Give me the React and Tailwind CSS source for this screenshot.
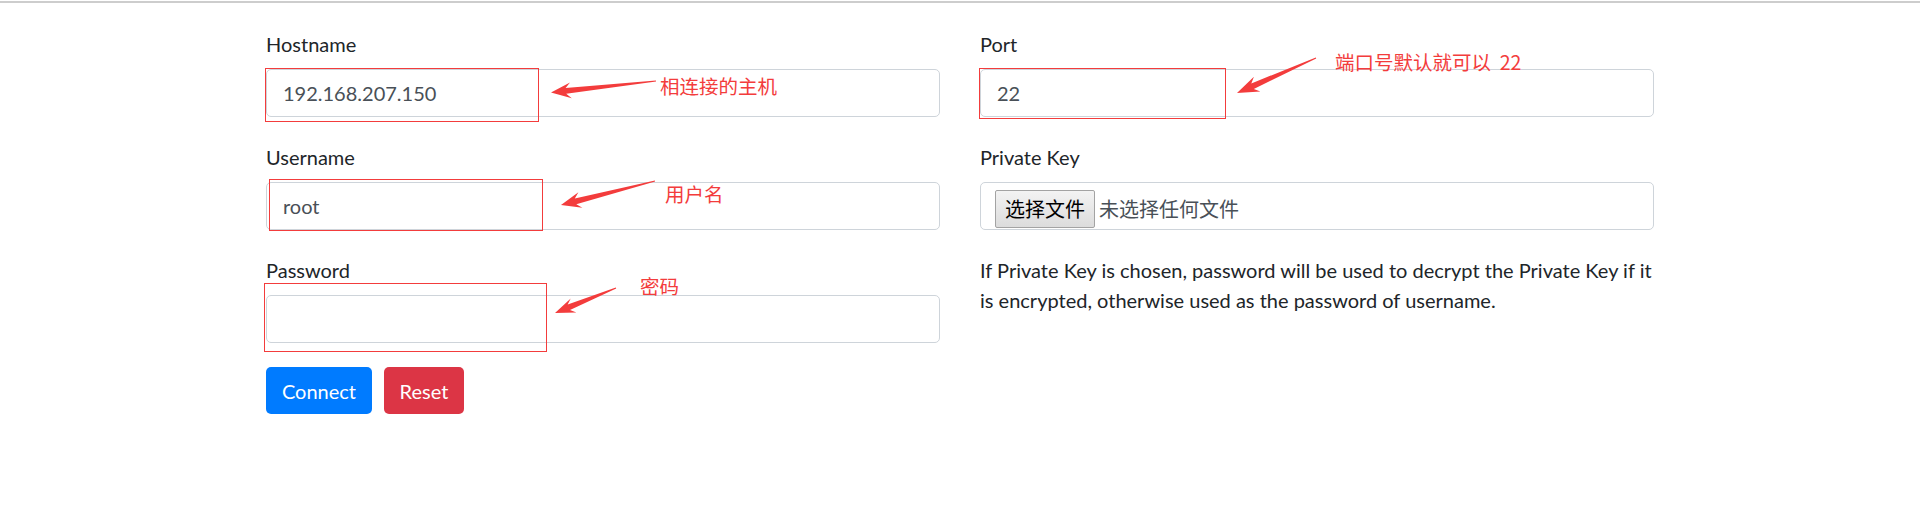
import React from "react";

const FONT = { fontFamily: "Lato, 'Noto Sans CJK SC', sans-serif" };
const CJK = { fontFamily: "'Noto Sans CJK SC', sans-serif" };

// screenshot-tool style arrow: thin tail, wide head
const Arrow = ({ tail, tip, head = 18, barb = 8, shaft = 3 }) => {
  const dx = tip[0] - tail[0];
  const dy = tip[1] - tail[1];
  const len = Math.hypot(dx, dy);
  const ux = dx / len;
  const uy = dy / len;
  const nx = -uy;
  const ny = ux;
  const bx = tip[0] - ux * head;
  const by = tip[1] - uy * head;
  const p = (x, y) => `${x.toFixed(1)},${y.toFixed(1)}`;
  const pts = [
    p(tail[0] + nx * 0.6, tail[1] + ny * 0.6),
    p(bx + ux * 3 + nx * shaft, by + uy * 3 + ny * shaft),
    p(bx - ux * 2 + nx * barb, by - uy * 2 + ny * barb),
    p(tip[0], tip[1]),
    p(bx - ux * 2 - nx * barb, by - uy * 2 - ny * barb),
    p(bx + ux * 3 - nx * shaft, by + uy * 3 - ny * shaft),
    p(tail[0] - nx * 0.6, tail[1] - ny * 0.6),
  ].join(" ");
  return <polygon points={pts} fill="#f33c3c" />;
};

const Field = ({ label, value, className = "" }) => (
  <div className={`mb-[25px] ${className}`}>
    <label className="block h-[30px] leading-[30px] text-[20px] text-[#212529] mb-[10px]">
      {label}
    </label>
    <div className="h-[48px] border border-[#ced4da] rounded-[5px] px-[16px] flex items-center text-[20px] text-[#495057]">
      {value}
    </div>
  </div>
);

const Note = ({ x, y, children }) => (
  <span
    className="absolute text-[19.5px] leading-[20px] text-[#f33c3c] whitespace-pre"
    style={{ ...CJK, left: x, top: y }}
  >
    {children}
  </span>
);

export default function App() {
  return (
    <div className="relative w-[1920px] h-[506px] bg-white overflow-hidden" style={FONT}>
      <div className="h-[3px] border-b-2 border-[#cdcdcd]" />

      <div className="w-[1388px] mx-auto pt-[26px] grid grid-cols-2 gap-x-[40px]">
        <Field label="Hostname" value="192.168.207.150" />
        <Field label="Port" value="22" />
        <Field label="Username" value="root" />

        {/* private key file input */}
        <div className="mb-[25px]">
          <label className="block h-[30px] leading-[30px] text-[20px] text-[#212529] mb-[10px]">
            Private Key
          </label>
          <div className="h-[48px] border border-[#ced4da] rounded-[5px] pl-[14px] pt-[7px] overflow-hidden flex items-start">
            <div
              className="w-[100px] h-[38px] border border-[#a3a3a3] rounded-[2px] bg-gradient-to-b from-[#f3f3f3] to-[#dcdcdc] flex items-center justify-center text-[20px] text-black"
              style={CJK}
            >
              选择文件
            </div>
            <span className="ml-[4px] h-[38px] flex items-center text-[20px] text-[#495057]" style={CJK}>
              未选择任何文件
            </span>
          </div>
        </div>

        <div>
          <Field label="Password" value="" className="!mb-[24px]" />
          <div className="flex gap-[12px]">
            <button className="w-[106px] h-[47px] rounded-[5px] bg-[#007bff] text-white text-[20px]">
              Connect
            </button>
            <button className="w-[80px] h-[47px] rounded-[5px] bg-[#dc3545] text-white text-[20px]">
              Reset
            </button>
          </div>
        </div>

        <p className="text-[20px] leading-[30px] text-[#212529] whitespace-nowrap">
          If Private Key is chosen, password will be used to decrypt the Private Key if it
          <br />
          is encrypted, otherwise used as the password of username.
        </p>
      </div>

      {/* annotations */}
      <svg className="absolute left-0 top-0 pointer-events-none" width="1920" height="506">
        <rect x="265.5" y="68.5" width="273" height="53" fill="none" stroke="#f33c3c" strokeWidth="1" />
        <rect x="269.5" y="179.5" width="273" height="51" fill="none" stroke="#f33c3c" strokeWidth="1" />
        <rect x="264.5" y="283.5" width="282" height="68" fill="none" stroke="#f33c3c" strokeWidth="1" />
        <rect x="979.5" y="68.5" width="246" height="50" fill="none" stroke="#f33c3c" strokeWidth="1" />
        <Arrow tail={[656, 81]} tip={[551, 92.5]} head={18} barb={8} />
        <Arrow tail={[655, 181]} tip={[561, 205]} head={18} barb={8} />
        <Arrow tail={[616, 288]} tip={[555, 313]} head={18} barb={7.5} />
        <Arrow tail={[1316, 58]} tip={[1237, 93]} head={20} barb={8} />
      </svg>
      <Note x={660} y={76}>相连接的主机</Note>
      <Note x={665} y={184}>用户名</Note>
      <Note x={640} y={276}>密码</Note>
      <Note x={1335} y={52}>{"端口号默认就可以  22"}</Note>
    </div>
  );
}
